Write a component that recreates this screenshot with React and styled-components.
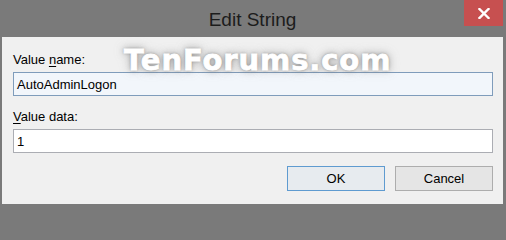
import React from "react";
import styled, { createGlobalStyle } from "styled-components";

const Global = createGlobalStyle`
  html, body { margin: 0; padding: 0; background: #7a7a7a; }
  * { box-sizing: border-box; }
`;

const Window = styled.div`
  position: relative;
  width: 506px;
  height: 207px;
  display: flex;
  flex-direction: column;
  background: #7a7a7a;
  border-left: 2px solid #7a7a7a;
  border-right: 3px solid #7a7a7a;
  border-bottom: 3px solid #7a7a7a;
  font-family: "Liberation Sans", Arial, sans-serif;
  overflow: hidden;
`;

const TitleBar = styled.div`
  height: 37px;
  flex: none;
  display: grid;
  grid-template-columns: 39px 1fr 39px;
  align-items: start;
`;

const Title = styled.div`
  grid-column: 2;
  text-align: center;
  font-size: 19px;
  color: #1c1c1c;
  line-height: 20px;
  padding-top: 10px;
`;

const CloseButton = styled.div`
  grid-column: 3;
  width: 39px;
  height: 26px;
  background: #c75050;
  display: flex;
  align-items: center;
  justify-content: center;
`;

const Body = styled.div`
  flex: 1;
  background: #f0f0f0;
  padding: 15px 10px 0 11px;
  display: flex;
  flex-direction: column;
`;

const Label = styled.div`
  font-size: 13px;
  line-height: 15px;
  color: #000;
  margin-top: ${(p) => p.$top || 0}px;
  margin-bottom: ${(p) => p.$bottom || 5}px;
`;

const U = styled.span`
  text-decoration: underline;
  text-underline-offset: 2px;
`;

const Input = styled.div`
  height: ${(p) => p.$h || 24}px;
  border: 1px solid ${(p) => (p.$focused ? "#7f9cbb" : "#abadb3")};
  background: ${(p) => (p.$focused ? "#f2f6fb" : "#ffffff")};
  font-size: 13px;
  color: #000;
  display: flex;
  align-items: center;
  padding-left: 3px;
`;

const ButtonRow = styled.div`
  display: flex;
  justify-content: flex-end;
  gap: 10px;
  margin-top: 13px;
`;

const Button = styled.div`
  width: 98px;
  height: 25px;
  border: 1px solid ${(p) => (p.$default ? "#5f9bd0" : "#adadad")};
  background: ${(p) => (p.$default ? "#e7ebef" : "#e5e5e5")};
  display: flex;
  align-items: center;
  justify-content: center;
  font-size: 13px;
  color: #000;
`;

const Watermark = styled.div`
  position: absolute;
  left: 122px;
  top: 46px;
  font-family: "DejaVu Sans", sans-serif;
  font-weight: bold;
  font-size: 29px;
  line-height: 29px;
  letter-spacing: 0.9px;
  color: #ffffff;
  -webkit-text-stroke: 0.8px #ffffff;
  text-shadow: 0 0 3px rgba(90, 90, 90, 0.6), 0 0 7px rgba(120, 120, 120, 0.55), 0 0 12px rgba(150, 150, 150, 0.4);
  pointer-events: none;
  white-space: nowrap;
`;

export default function App() {
  return (
    <>
      <Global />
      <Window>
        <TitleBar>
          <Title>Edit String</Title>
          <CloseButton>
            <svg width="12" height="11" viewBox="0 0 12 11">
              <path d="M1.5 1 L10.5 10 M10.5 1 L1.5 10" stroke="#fff" strokeWidth="2.4" strokeLinecap="square" />
            </svg>
          </CloseButton>
        </TitleBar>
        <Body>
          <Label>
            Value <U>n</U>ame:
          </Label>
          <Input $focused>AutoAdminLogon</Input>
          <Label $top={13}>
            <U>V</U>alue data:
          </Label>
          <Input>1</Input>
          <ButtonRow>
            <Button $default>OK</Button>
            <Button>Cancel</Button>
          </ButtonRow>
        </Body>
        <Watermark>TenForums.com</Watermark>
      </Window>
    </>
  );
}
